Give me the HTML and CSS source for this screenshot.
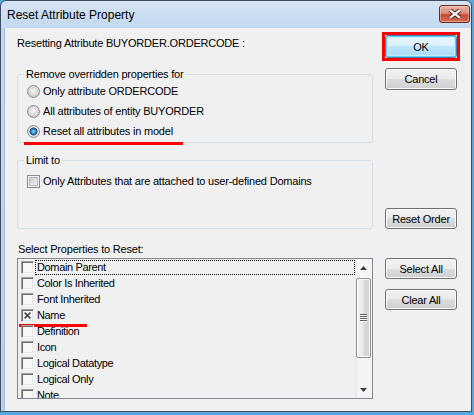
FILE: index.html
```html
<!DOCTYPE html>
<html>
<head>
<meta charset="utf-8">
<title>Reset Attribute Property</title>
<link rel="stylesheet" href="styles.css">
</head>
<body>
<div class="window">
  <div class="titlebar">
    <span class="title">Reset Attribute Property</span>
    <div class="close">
      <svg width="14" height="10" viewBox="0 0 14 10">
        <path d="M2 1.2 L12 8.8 M12 1.2 L2 8.8" stroke="#4a1c14" stroke-width="4.2" fill="none"/>
        <path d="M2 1.2 L12 8.8 M12 1.2 L2 8.8" stroke="#ffffff" stroke-width="2.2" fill="none"/>
      </svg>
    </div>
  </div>
  <div class="client">
    <div class="main">
      <div class="header">Resetting Attribute BUYORDER.ORDERCODE :</div>
      <fieldset class="group group-remove">
        <legend>Remove overridden properties for</legend>
        <div class="opt"><span class="radio"></span>Only attribute ORDERCODE</div>
        <div class="opt"><span class="radio"></span>All attributes of entity BUYORDER</div>
        <div class="opt"><span class="radio checked"></span>Reset all attributes in model</div>
        <span class="mark mark-remove"></span>
      </fieldset>
      <fieldset class="group group-limit">
        <legend>Limit to</legend>
        <div class="opt"><span class="check"></span>Only Attributes that are attached to user-defined Domains</div>
      </fieldset>
      <div class="list-label">Select Properties to Reset:</div>
      <div class="listbox">
        <ul class="items">
          <li class="item"><span class="cb"></span><span class="lbl focus">Domain Parent</span></li>
          <li class="item"><span class="cb"></span><span class="lbl">Color Is Inherited</span></li>
          <li class="item"><span class="cb"></span><span class="lbl">Font Inherited</span></li>
          <li class="item"><span class="cb"><svg width="7" height="7" viewBox="0 0 7 7"><path d="M0.6 0.6 L6.4 6.4 M6.4 0.6 L0.6 6.4" stroke="#4a4a4a" stroke-width="1.6" fill="none"/></svg></span><span class="lbl">Name</span><span class="mark mark-name"></span></li>
          <li class="item"><span class="cb"></span><span class="lbl">Definition</span></li>
          <li class="item"><span class="cb"></span><span class="lbl">Icon</span></li>
          <li class="item"><span class="cb"></span><span class="lbl">Logical Datatype</span></li>
          <li class="item"><span class="cb"></span><span class="lbl">Logical Only</span></li>
          <li class="item"><span class="cb"></span><span class="lbl">Note</span></li>
        </ul>
        <div class="vscroll">
          <div class="arrow"><svg width="7" height="4" viewBox="0 0 7 4"><path d="M0 4 L3.5 0 L7 4 Z" fill="#3c3c3c"/></svg></div>
          <div class="track">
            <div class="thumb">
              <svg width="7" height="8" viewBox="0 0 7 8">
                <path d="M0 0.5 H7 M0 2.5 H7 M0 4.5 H7 M0 6.5 H7" stroke="#5e5e5e" stroke-width="1"/>
                <path d="M0 1.5 H7 M0 3.5 H7 M0 5.5 H7 M0 7.5 H7" stroke="#ffffff" stroke-width="1"/>
              </svg>
            </div>
          </div>
          <div class="arrow"><svg width="7" height="4" viewBox="0 0 7 4"><path d="M0 0 L7 0 L3.5 4 Z" fill="#3c3c3c"/></svg></div>
        </div>
      </div>
    </div>
    <div class="side">
      <div class="okframe"><button class="btn btn-default">OK</button></div>
      <button class="btn btn-cancel">Cancel</button>
      <button class="btn btn-order">Reset Order</button>
      <button class="btn btn-selall">Select All</button>
      <button class="btn btn-clear">Clear All</button>
    </div>
  </div>
</div>
</body>
</html>
```
FILE: styles.css
```css
* { box-sizing: border-box; }
html, body { margin: 0; padding: 0; }
body {
  width: 474px;
  height: 415px;
  overflow: hidden;
  background: #56a8df;
  font-family: "Liberation Sans", Arial, sans-serif;
  font-size: 11px;
  letter-spacing: -0.2px;
  color: #000;
}
.window {
  width: 472px;
  height: 412px;
  border: 1px solid #3b4f63;
  border-radius: 6px 6px 0 0;
  background: linear-gradient(#d5e4f4 0, #c3d8ef 27px, #b9d1ea 100%);
  padding-left: 3px;
  display: flex;
  flex-direction: column;
}
.titlebar {
  height: 27px;
  flex: none;
  display: flex;
  align-items: center;
  justify-content: space-between;
  padding-left: 3px;
}
.title { font-size: 12px; letter-spacing: 0; }
.close {
  align-self: flex-start;
  margin-top: 4px;
  margin-right: 1px;
  width: 31px;
  height: 18px;
  border: 1px solid #6a2c22;
  border-radius: 3px;
  background: linear-gradient(#eab0a3 0%, #dc8e7d 45%, #c84a33 55%, #d66c52 100%);
  box-shadow: inset 0 0 0 1px rgba(255,255,255,0.35);
  display: flex;
  align-items: center;
  justify-content: center;
}
.client {
  flex: 1;
  background: #f0f0f0;
  border-left: 1px solid #a5bbd3;
  display: flex;
  padding-left: 12px;
  column-gap: 12px;
}
.main {
  width: 356px;
  flex: none;
  display: flex;
  flex-direction: column;
}
.header {
  margin-top: 8px;
  line-height: 14px;
}
.group {
  margin: 0;
  min-width: 0;
  border: 1px solid #d5dfe5;
  border-radius: 3px;
  padding: 0 8px 1px 9px;
  position: relative;
}
.group legend {
  padding: 0 2px;
  margin-left: -3px;
  line-height: 14px;
}
.group-remove { margin-top: 17px; }
.group-limit { margin-top: 10px; padding-top: 4px; padding-bottom: 37px; }
.opt {
  height: 20px;
  display: flex;
  align-items: center;
}
.radio {
  flex: none;
  width: 13px;
  height: 13px;
  margin-right: 3px;
  border-radius: 50%;
  border: 1px solid #8b8d8f;
  background: radial-gradient(circle at 50% 45%, #f6f6f6 0, #e6e6e6 2.5px, #cfcfcf 5.5px);
}
.radio.checked {
  background: radial-gradient(circle at 50% 50%, #a6dcfa 0, #3b98d6 1.8px, #1d5c93 3.4px, #2a4f70 3.8px, #f2f2f2 4.3px, #e4e4e4 5px, #cfcfcf 6px);
}
.check {
  flex: none;
  width: 13px;
  height: 13px;
  margin-right: 3px;
  border: 1px solid #8b8d8f;
  background: linear-gradient(135deg, #bfc3c7 0%, #e4e5e6 60%, #f3f3f3 100%);
  box-shadow: inset 0 0 0 1px #f4f4f4, inset 0 0 0 2px #b8bcc0;
}
.mark {
  position: absolute;
  background: #ff0000;
  height: 3px;
}
.mark-remove { left: 6px; bottom: -3px; width: 159px; }
.list-label {
  margin-top: 13px;
  line-height: 14px;
  padding-left: 1px;
}
.listbox {
  margin-top: 2px;
  height: 141px;
  border: 1px solid #828790;
  display: flex;
  background: #f0f0f0;
}
.items {
  list-style: none;
  margin: 0;
  padding: 0 0 0 3px;
  flex: 1;
  min-width: 0;
  overflow: hidden;
  letter-spacing: -0.35px;
}
.item {
  height: 16px;
  display: flex;
  align-items: flex-start;
  position: relative;
}
.cb {
  flex: none;
  width: 13px;
  height: 13px;
  margin-top: 2px;
  border-style: solid;
  border-width: 1px;
  border-color: #a0a0a0 #ffffff #ffffff #a0a0a0;
  background: #f7f7f7;
  box-shadow: inset 1px 1px 0 #6b6b6b, inset -1px -1px 0 #e3e3e3;
  display: flex;
  align-items: center;
  justify-content: center;
}
.lbl {
  margin-top: 1px;
  margin-left: 1px;
  height: 15px;
  line-height: 13px;
  padding-left: 1px;
  border: 1px solid transparent;
  white-space: nowrap;
}
.lbl.focus { border: 1px dotted #000; flex: 1; }
.mark-name { left: -2px; top: 17px; width: 68px; }
.vscroll {
  width: 17px;
  flex: none;
  display: flex;
  flex-direction: column;
  background: linear-gradient(to right, #e4e4e4 0, #eeeeee 1px, #f5f5f5 4px, #f3f3f3 100%);
}
.arrow {
  height: 17px;
  flex: none;
  display: flex;
  align-items: center;
  justify-content: center;
}
.track {
  flex: 1;
  padding: 2px 1px 0 1px;
}
.thumb {
  height: 80px;
  border: 1px solid #979797;
  border-radius: 2px;
  background: linear-gradient(to right, #f4f4f4 0%, #e8e8e8 45%, #dadada 55%, #d2d2d2 100%);
  box-shadow: inset 0 0 0 1px rgba(255,255,255,0.7);
  display: flex;
  align-items: center;
  justify-content: center;
}
.side {
  width: 72px;
  flex: none;
  display: flex;
  flex-direction: column;
  padding-top: 4px;
}
.okframe {
  margin: 0 -3px;
  height: 29px;
  border: 3px solid #ff0000;
  display: flex;
}
.btn {
  margin: 0;
  padding: 0;
  font: inherit;
  letter-spacing: inherit;
  color: #000;
  width: 72px;
  height: 21px;
  border: 1px solid #707070;
  border-radius: 3px;
  background: linear-gradient(#f2f2f2 0%, #ebebeb 50%, #dddddd 50%, #cfcfcf 100%);
  box-shadow: inset 0 0 0 1px #fbfbfb;
  text-align: center;
  flex: none;
}
.btn-default {
  height: 23px;
  border-color: #3c7fb1;
  background: linear-gradient(#eaf6fd 0%, #d9f0fc 50%, #bee6fd 50%, #a7d9f5 100%);
  box-shadow: inset 0 0 0 1px #62cdf6, inset 0 0 0 2px #c5ecfb;
}
.btn-cancel { margin-top: 7px; height: 22px; }
.btn-order { margin-top: 118px; }
.btn-selall { margin-top: 29px; }
.btn-clear { margin-top: 10px; }
```
